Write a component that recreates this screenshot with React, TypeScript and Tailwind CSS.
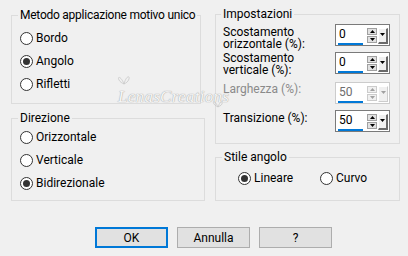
import React from "react";

function Radio({ label, checked }: { label: string; checked?: boolean }) {
  return (
    <div className="flex items-center h-[16px] gap-[3px]">
      <span className="w-[13px] h-[13px] rounded-full border border-[#333333] bg-white flex items-center justify-center">
        {checked && <span className="w-[7px] h-[7px] rounded-full bg-[#333333]" />}
      </span>
      <span>{label}</span>
    </div>
  );
}

function Arrow({ up, disabled }: { up?: boolean; disabled?: boolean }) {
  return (
    <svg width="5" height="3" viewBox="0 0 5 3">
      <path d={up ? "M2.5 0 L5 3 L0 3 Z" : "M0 0 L5 0 L2.5 3 Z"} fill={disabled ? "#a0a0a0" : "#000"} />
    </svg>
  );
}

function Spinner({ value, disabled }: { value: string; disabled?: boolean }) {
  const btn =
    "w-[10px] h-[7px] border flex items-center justify-center " +
    (disabled ? "border-[#cccccc] bg-[#f0f0f0]" : "border-[#a0a0a0] bg-[#e1e1e1]");
  return (
    <div
      className={
        "w-[55px] h-[22px] border bg-white flex items-start pl-[2px] pt-[2px] " +
        (disabled ? "border-[#cccccc] text-[#6d6d6d]" : "border-[#7a7a7a] text-black")
      }
    >
      <div className="w-[29px] h-[18px] flex flex-col justify-between">
        <span className="leading-[14px] pl-[1px]">{value}</span>
        <span className="block w-[25px] h-[2px] bg-[#0078d7]" />
      </div>
      <div className="flex flex-col gap-[1px] mt-[1px]">
        <span className={btn}>
          <Arrow up disabled={disabled} />
        </span>
        <span className={btn}>
          <Arrow disabled={disabled} />
        </span>
      </div>
      <span
        className={
          "ml-[1px] mt-[1px] w-[10px] h-[16px] border-t border-l flex items-start justify-center pt-[4px] bg-[#f0f0f0] border-white " +
          (disabled
            ? "border-r border-b border-r-[#cccccc] border-b-[#cccccc]"
            : "border-r-2 border-b-2 border-r-[#696969] border-b-[#696969]")
        }
      >
        <Arrow disabled={disabled} />
      </span>
    </div>
  );
}

function Group({
  title,
  className,
  legendClass = "",
  children,
}: {
  title: string;
  className: string;
  legendClass?: string;
  children: React.ReactNode;
}) {
  return (
    <fieldset className={"min-w-0 border border-[#dcdcdc] " + className}>
      <legend className={"ml-[-2px] px-[2px] leading-[16px] whitespace-nowrap " + legendClass}>{title}</legend>
      {children}
    </fieldset>
  );
}

export default function App() {
  return (
    <div
      className="relative w-[408px] h-[256px] bg-[#f0f0f0] text-black text-[12px] overflow-hidden"
      style={{ fontFamily: 'Roboto, "Noto Sans", sans-serif' }}
    >
      <div className="flex pl-[11px] pt-[6px] gap-[10px]">
        {/* left column */}
        <div className="flex flex-col pt-[1px] gap-[6px] w-[194px]">
          <Group
            title="Metodo applicazione motivo unico"
            className="w-[190px] h-[97px] px-[8px]"
            legendClass="tracking-[-0.25px]"
          >
            <div className="flex flex-col pt-[7px] gap-[7px]">
              <Radio label="Bordo" />
              <Radio label="Angolo" checked />
              <Radio label="Rifletti" />
            </div>
          </Group>
          <Group title="Direzione" className="w-[194px] h-[91px] px-[8px]">
            <div className="flex flex-col pt-[3px] gap-[7px]">
              <Radio label="Orizzontale" />
              <Radio label="Verticale" />
              <Radio label="Bidirezionale" checked />
            </div>
          </Group>
        </div>

        {/* right column */}
        <div className="flex flex-col gap-[5px] w-[185px]">
          <Group title="Impostazioni" className="w-[185px] h-[138px] pl-[7px] pr-[9px]">
            <div className="flex flex-col pt-[2px] leading-[12px]">
              <div className="h-[28px] flex items-start justify-between">
                <span className="pt-[2px]">
                  Scostamento
                  <br />
                  orizzontale (%):
                </span>
                <Spinner value="0" />
              </div>
              <div className="h-[30px] flex items-start justify-between">
                <span>
                  Scostamento
                  <br />
                  verticale (%):
                </span>
                <Spinner value="0" />
              </div>
              <div className="h-[28px] flex items-start justify-between">
                <span className="pt-[1px] text-[#8a8a8a]">Larghezza (%):</span>
                <Spinner value="50" disabled />
              </div>
              <div className="h-[22px] flex items-start justify-between">
                <span className="pt-[2px]">Transizione (%):</span>
                <Spinner value="50" />
              </div>
            </div>
          </Group>
          <Group title="Stile angolo" className="w-[185px] h-[52px] pl-[8px]">
            <div className="flex pt-[5px] pl-[14px]">
              <div className="w-[82px]">
                <Radio label="Lineare" checked />
              </div>
              <Radio label="Curvo" />
            </div>
          </Group>
        </div>
      </div>

      {/* buttons */}
      <div className="flex pl-[95px] pt-[26px] gap-[9px]">
        <button className="w-[73px] h-[21px] border-2 border-[#0078d7] bg-[#e1e1e1] leading-[16px]">OK</button>
        <button className="w-[73px] h-[21px] border border-[#adadad] bg-[#e1e1e1] leading-[16px]">Annulla</button>
        <button className="w-[73px] h-[21px] border border-[#adadad] bg-[#e1e1e1] leading-[16px]">?</button>
      </div>

      {/* watermark */}
      <div
        className="absolute left-[118px] top-[84px] text-[17px] italic text-[#f6f6f6] tracking-[0.3px] [text-shadow:0_0_1px_#a8a8a8,0_0_1px_#a8a8a8] pointer-events-none"
        style={{ fontFamily: '"Liberation Serif", serif' }}
      >
        LenasCreations
      </div>
      <svg className="absolute left-[117px] top-[74px] pointer-events-none" width="14" height="12" viewBox="0 0 14 12">
        <path d="M7 10 C4 2 0 2 2 6 C3 8 5 9 7 10 C9 2 13 1 12 5 C11 8 9 9 7 10" fill="none" stroke="#c8c8c8" strokeWidth="0.8" />
      </svg>
      <svg className="absolute left-[212px] top-[99px] pointer-events-none" width="12" height="10" viewBox="0 0 12 10">
        <path d="M6 8 C3 1 0 2 2 5 C3 7 5 7 6 8 C8 2 11 2 10 5 C9 7 7 7 6 8" fill="none" stroke="#c8c8c8" strokeWidth="0.8" />
      </svg>
    </div>
  );
}
